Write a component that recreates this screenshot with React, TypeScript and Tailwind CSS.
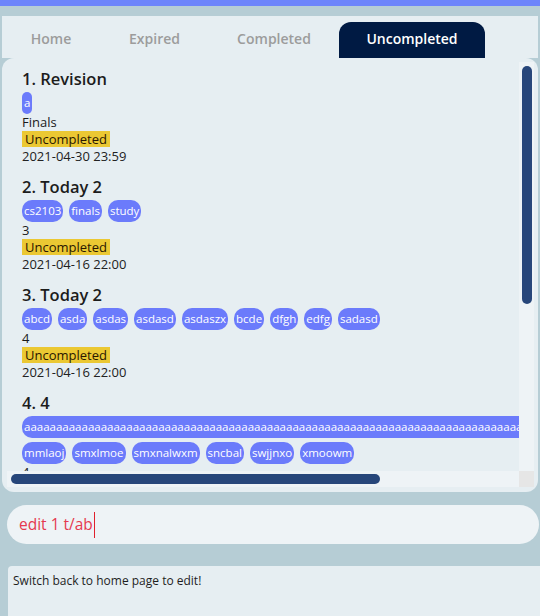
import React from "react";

type Task = {
  title: string;
  tags: string[];
  desc: string;
  date: string;
};

const tasks: Task[] = [
  { title: "1. Revision", tags: ["a"], desc: "Finals", date: "2021-04-30 23:59" },
  { title: "2. Today 2", tags: ["cs2103", "finals", "study"], desc: "3", date: "2021-04-16 22:00" },
  {
    title: "3. Today 2",
    tags: ["abcd", "asda", "asdas", "asdasd", "asdaszx", "bcde", "dfgh", "edfg", "sadasd"],
    desc: "4",
    date: "2021-04-16 22:00",
  },
  {
    title: "4. 4",
    tags: [
      "a".repeat(90),
      "mmlaoj",
      "smxlmoe",
      "smxnalwxm",
      "sncbal",
      "swjjnxo",
      "xmoowm",
    ],
    desc: "4",
    date: "2021-04-16 22:00",
  },
];

const tabs = [
  { label: "Home", w: "w-[98px]" },
  { label: "Expired", w: "w-[109px]" },
  { label: "Completed", w: "w-[130px]" },
  { label: "Uncompleted", w: "w-[146px]", active: true },
];

const TaskCell = ({ task }: { task: Task }) => (
  <div className="pl-[15px] pt-[6px] pb-[8px] h-[108px]">
    <div className="text-[16.5px] leading-[22px] font-semibold text-[#1c1c1c] whitespace-nowrap">
      {task.title}
    </div>
    <div className="flex flex-wrap gap-x-[6px] gap-y-[4px] mt-[2px]">
      {task.tags.map((t, i) => (
        <span
          key={i}
          className="h-[22px] px-[2px] rounded-[10px] bg-[#6b7bfb] text-white text-[11.5px] leading-[22px] whitespace-nowrap"
        >
          {t}
        </span>
      ))}
    </div>
    <div className="text-[13px] leading-[17px] text-[#1a1a1a]">{task.desc}</div>
    <div className="flex">
      <span className="bg-[#ebc833] px-[3px] text-[13px] leading-[16px] text-[#2a1600]">
        Uncompleted
      </span>
    </div>
    <div className="text-[13px] leading-[18px] text-[#222]">{task.date}</div>
  </div>
);

export default function App() {
  return (
    <div
      className="w-[540px] h-[616px] bg-[#b6cdd5] overflow-hidden flex flex-col"
      style={{ fontFamily: '"Open Sans", "Noto Sans", sans-serif' }}
    >
      <div className="h-[6px] bg-[#6d85fb]" />
      <div className="h-[10px]" />

      {/* tab bar */}
      <div className="mx-[2px] h-[42px] bg-[#e6eef2] flex items-end">
        {tabs.map((t) => (
          <div
            key={t.label}
            className={
              t.active
                ? `${t.w} h-[36px] pb-[3px] rounded-t-[12px] bg-[#001a43] text-white text-[14px] font-semibold flex items-center justify-center`
                : `${t.w} h-[36px] pb-[3px] text-[#9c9c9c] text-[14px] font-semibold flex items-center justify-center`
            }
          >
            {t.label}
          </div>
        ))}
      </div>

      {/* list panel */}
      <div className="mx-[2px] h-[434px] bg-[#e6eef2] rounded-[12px] pl-[5px] pr-[4px] pt-[4px] pb-[5px] flex flex-col">
        <div className="flex flex-1 min-h-0">
          <div className="flex-1 min-w-0 overflow-hidden">
            {tasks.map((t, i) => (
              <TaskCell key={i} task={t} />
            ))}
          </div>
          <div className="w-[15px] bg-[#eef3f6] pt-[4px] pl-[3px]">
            <div className="w-[10px] h-[238px] rounded-full bg-[#27467a]" />
          </div>
        </div>
        <div className="h-[16px] flex">
          <div className="flex-1 bg-[#eef3f6] pl-[4px] pt-[3px]">
            <div className="w-[369px] h-[10px] rounded-full bg-[#27467a]" />
          </div>
          <div className="w-[15px] bg-[#e6e6e6]" />
        </div>
      </div>

      {/* command box */}
      <div className="h-[13px]" />
      <div className="ml-[7px] mr-[1px] h-[39px] rounded-full bg-[#eef3f6] flex items-center pl-[12px]">
        <span className="text-[15.5px] text-[#e5394f]">edit 1 t/ab</span>
        <span className="w-[1px] h-[26px] bg-[#e0202c] ml-[1px]" />
      </div>

      {/* result box */}
      <div className="h-[22px]" />
      <div className="ml-[8px] flex-1 bg-[#e6eef2] rounded-tl-[4px] pl-[5px] pt-[1px]">
        <span className="text-[12px] text-[#1e1e1e]">Switch back to home page to edit!</span>
      </div>
    </div>
  );
}
